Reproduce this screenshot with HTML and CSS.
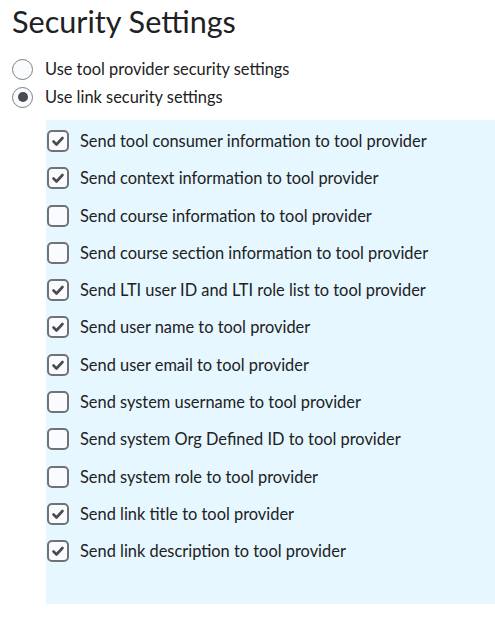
FILE: index.html
```html
<!DOCTYPE html>
<html>
<head>
<meta charset="utf-8">
<link rel="stylesheet" href="styles.css">
</head>
<body>
<div class="page">
  <h1 class="title">Security Settings</h1>
  <div class="radios">
    <label class="radio-row"><span class="radio"></span><span>Use tool provider security settings</span></label>
    <label class="radio-row"><span class="radio on"></span><span>Use link security settings</span></label>
  </div>
  <div class="panel">
    <div class="row"><span class="cb on"><svg viewBox="0 0 22 22"><path d="M6.5 11.5l3 3 6-6.5" /></svg></span><span>Send tool consumer information to tool provider</span></div>
    <div class="row"><span class="cb on"><svg viewBox="0 0 22 22"><path d="M6.5 11.5l3 3 6-6.5" /></svg></span><span>Send context information to tool provider</span></div>
    <div class="row"><span class="cb"></span><span>Send course information to tool provider</span></div>
    <div class="row"><span class="cb"></span><span>Send course section information to tool provider</span></div>
    <div class="row"><span class="cb on"><svg viewBox="0 0 22 22"><path d="M6.5 11.5l3 3 6-6.5" /></svg></span><span>Send LTI user ID and LTI role list to tool provider</span></div>
    <div class="row"><span class="cb on"><svg viewBox="0 0 22 22"><path d="M6.5 11.5l3 3 6-6.5" /></svg></span><span>Send user name to tool provider</span></div>
    <div class="row"><span class="cb on"><svg viewBox="0 0 22 22"><path d="M6.5 11.5l3 3 6-6.5" /></svg></span><span>Send user email to tool provider</span></div>
    <div class="row"><span class="cb"></span><span>Send system username to tool provider</span></div>
    <div class="row"><span class="cb"></span><span>Send system Org Defined ID to tool provider</span></div>
    <div class="row"><span class="cb"></span><span>Send system role to tool provider</span></div>
    <div class="row"><span class="cb on"><svg viewBox="0 0 22 22"><path d="M6.5 11.5l3 3 6-6.5" /></svg></span><span>Send link title to tool provider</span></div>
    <div class="row"><span class="cb on"><svg viewBox="0 0 22 22"><path d="M6.5 11.5l3 3 6-6.5" /></svg></span><span>Send link description to tool provider</span></div>
  </div>
</div>
</body>
</html>
```
FILE: styles.css
```css
html, body {
  margin: 0;
  padding: 0;
  background: #ffffff;
}
body {
  font-family: Lato, "Noto Sans", sans-serif;
  color: #202122;
}
.page {
  padding: 0 0 0 12px;
}
.title {
  margin: 0;
  padding-top: 4px;
  font-size: 30.6px;
  font-weight: 400;
  line-height: 36px;
}
.radios {
  margin-top: 18px;
  display: flex;
  flex-direction: column;
  gap: 6px;
}
.radio-row {
  display: flex;
  align-items: center;
  gap: 12px;
  font-size: 16.4px;
  line-height: 22px;
}
.radio {
  width: 19px;
  height: 19px;
  border: 1.5px solid #7c8083;
  border-radius: 50%;
  background: #f9fbff;
  position: relative;
  flex: none;
}
.radio.on::after {
  content: "";
  position: absolute;
  left: 4.5px;
  top: 4.5px;
  width: 10px;
  height: 10px;
  border-radius: 50%;
  background: #494c4e;
}
.panel {
  margin: 12px 0 0 34px;
  background: #e6f7ff;
  padding: 10px 0 42px 1px;
  display: flex;
  flex-direction: column;
  gap: 15.3px;
}
.row {
  display: flex;
  align-items: center;
  gap: 11px;
  font-size: 16.4px;
  line-height: 22px;
}
.cb {
  width: 18px;
  height: 18px;
  border: 2px solid #6e7376;
  border-radius: 5px;
  background: #f9fbff;
  flex: none;
  position: relative;
}
.cb svg {
  position: absolute;
  left: -2px;
  top: -2px;
  width: 22px;
  height: 22px;
  fill: none;
  stroke: #494c4e;
  stroke-width: 2.6;
  stroke-linecap: round;
  stroke-linejoin: round;
}
```
